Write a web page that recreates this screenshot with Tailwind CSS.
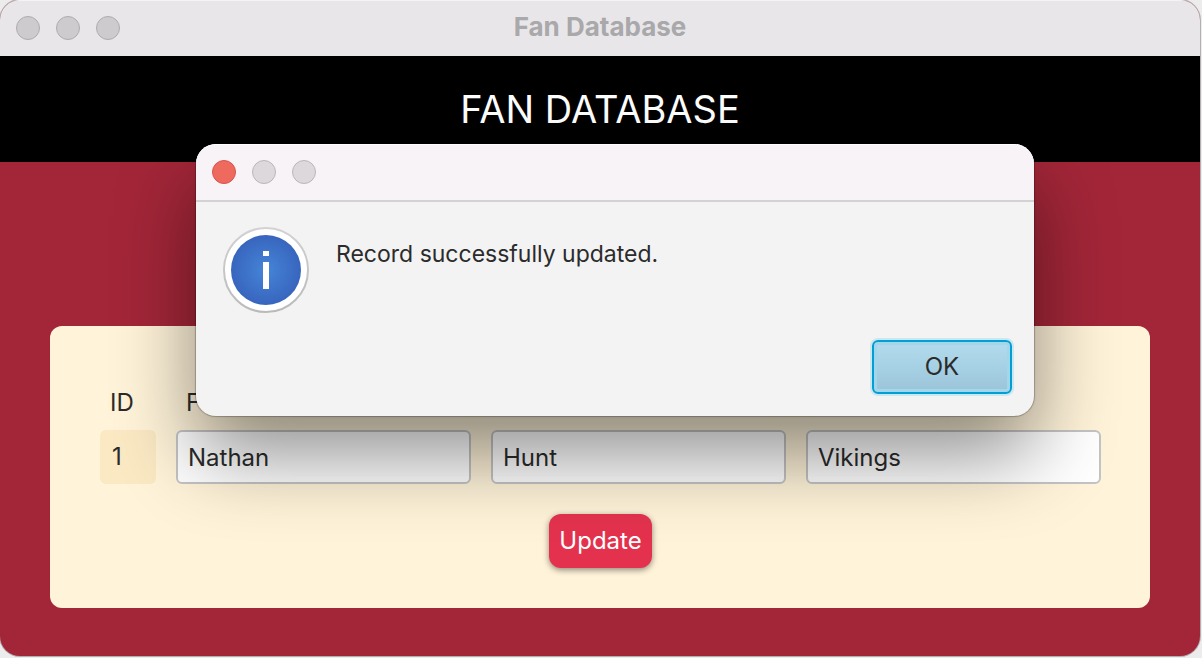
<!DOCTYPE html>
<html lang="en">
<head>
<meta charset="utf-8">
<meta name="viewport" content="width=device-width, initial-scale=1">
<title>Fan Database</title>
<script src="https://cdn.jsdelivr.net/npm/@tailwindcss/browser@4"></script>
</head>
<body class="min-h-screen bg-[#ececec] pr-0.5 pb-0.5 font-['Inter','Liberation_Sans',sans-serif] text-2xl text-[#2b2b2b]">
<div class="relative flex min-h-[calc(100vh-2px)] flex-col overflow-hidden rounded-[20px] bg-[#a32638] shadow-[0_0_0_1px_#b4b0b2]">
  <div class="grid h-14 grid-cols-[1fr_auto_1fr] items-center bg-[#e8e6e9] px-4 shadow-[inset_0_1px_0_#f4f3f5]">
    <div class="flex gap-4">
      <button type="button" aria-label="Close window" class="size-6 rounded-full border border-[#aeacaf] bg-[#cdcbce]"></button>
      <button type="button" aria-label="Minimize window" class="size-6 rounded-full border border-[#aeacaf] bg-[#cdcbce]"></button>
      <button type="button" aria-label="Zoom window" class="size-6 rounded-full border border-[#aeacaf] bg-[#cdcbce]"></button>
    </div>
    <div class="pb-0.5 text-[26px] leading-8 font-bold text-[#a9a8aa]">Fan Database</div>
  </div>

  <header class="flex h-[106px] items-center justify-center bg-black">
    <h1 class="text-[38px] leading-none text-white">FAN DATABASE</h1>
  </header>

  <main class="flex-1 px-[50px] pt-[164px] pb-12">
    <form class="rounded-xl bg-[#fff3d9] pt-[50px] pr-[49px] pb-10 pl-[50px]">
      <div class="grid grid-cols-[56px_1fr_1fr_1fr] gap-x-5">
        <span id="id-label" class="flex h-[54px] items-center pl-2.5">ID</span>
        <label for="first" class="flex h-[54px] items-center pl-2.5">First Name</label>
        <label for="last" class="flex h-[54px] items-center pl-2.5">Last Name</label>
        <label for="team" class="flex h-[54px] items-center pl-2.5">Team</label>
        <output aria-labelledby="id-label" class="flex h-[54px] items-center rounded-md bg-[#fae9c3] pl-3">1</output>
        <input id="first" value="Nathan" class="h-[54px] min-w-0 rounded-md border-2 border-[#c4c4c4] bg-white px-2.5">
        <input id="last" value="Hunt" class="h-[54px] min-w-0 rounded-md border-2 border-[#c4c4c4] bg-white px-2.5">
        <input id="team" value="Vikings" class="h-[54px] min-w-0 rounded-md border-2 border-[#c4c4c4] bg-white px-2.5">
      </div>
      <div class="mt-[30px] flex justify-center">
        <button type="button" class="h-[54px] rounded-xl bg-[#e4324e] px-2.5 text-white shadow-[0_2px_6px_rgba(0,0,0,0.45)]">Update</button>
      </div>
    </form>
  </main>

  <section role="dialog" aria-labelledby="message" class="absolute top-36 right-[166px] left-[196px] rounded-[20px] bg-[#f3f3f3] shadow-[0_0_1px_1px_rgba(0,0,0,0.25),0_38px_80px_rgba(0,0,0,0.45)]">
    <div class="flex h-[58px] gap-4 rounded-t-[20px] border-t border-b-2 border-t-white border-b-[#d3d1d3] bg-[#f7f3f7] px-4 pt-[15px]">
      <button type="button" aria-label="Close dialog" class="size-6 rounded-full border border-[#d9534a] bg-[#ee6a5f]"></button>
      <button type="button" aria-label="Minimize dialog" class="size-6 rounded-full border border-[#bab6ba] bg-[#dcd8dc]"></button>
      <button type="button" aria-label="Zoom dialog" class="size-6 rounded-full border border-[#bab6ba] bg-[#dcd8dc]"></button>
    </div>
    <div class="flex gap-[26px] px-[26px] pt-6">
      <svg class="size-[88px]" viewBox="0 0 88 88" aria-hidden="true">
        <defs>
          <radialGradient id="blue"><stop offset="0" stop-color="#4585d8"/><stop offset="1" stop-color="#3865be"/></radialGradient>
          <linearGradient id="rim" x2="0" y2="1"><stop offset="0" stop-color="#d2d2d2"/><stop offset="1" stop-color="#bababa"/></linearGradient>
        </defs>
        <circle cx="44" cy="44" r="42" fill="#fff" stroke="url(#rim)" stroke-width="2"/>
        <circle cx="44" cy="44" r="35" fill="url(#blue)"/>
        <path d="M41 25h6v5h-6zM41 36h6v27h-6z" fill="#fff"/>
      </svg>
      <p id="message" class="pt-2.5 text-[23px] leading-9">Record successfully updated.</p>
    </div>
    <div class="flex justify-end px-[22px] pt-[26px] pb-[22px]">
      <button type="button" class="h-[54px] w-[140px] rounded-md border-2 border-[#039ed3] bg-linear-to-b from-[#b2dcee] to-[#9bc4d9] shadow-[0_0_0_2px_#cbe7f1,inset_0_0_0_3px_#a2d6ea]">OK</button>
    </div>
  </section>
</div>
</body>
</html>
